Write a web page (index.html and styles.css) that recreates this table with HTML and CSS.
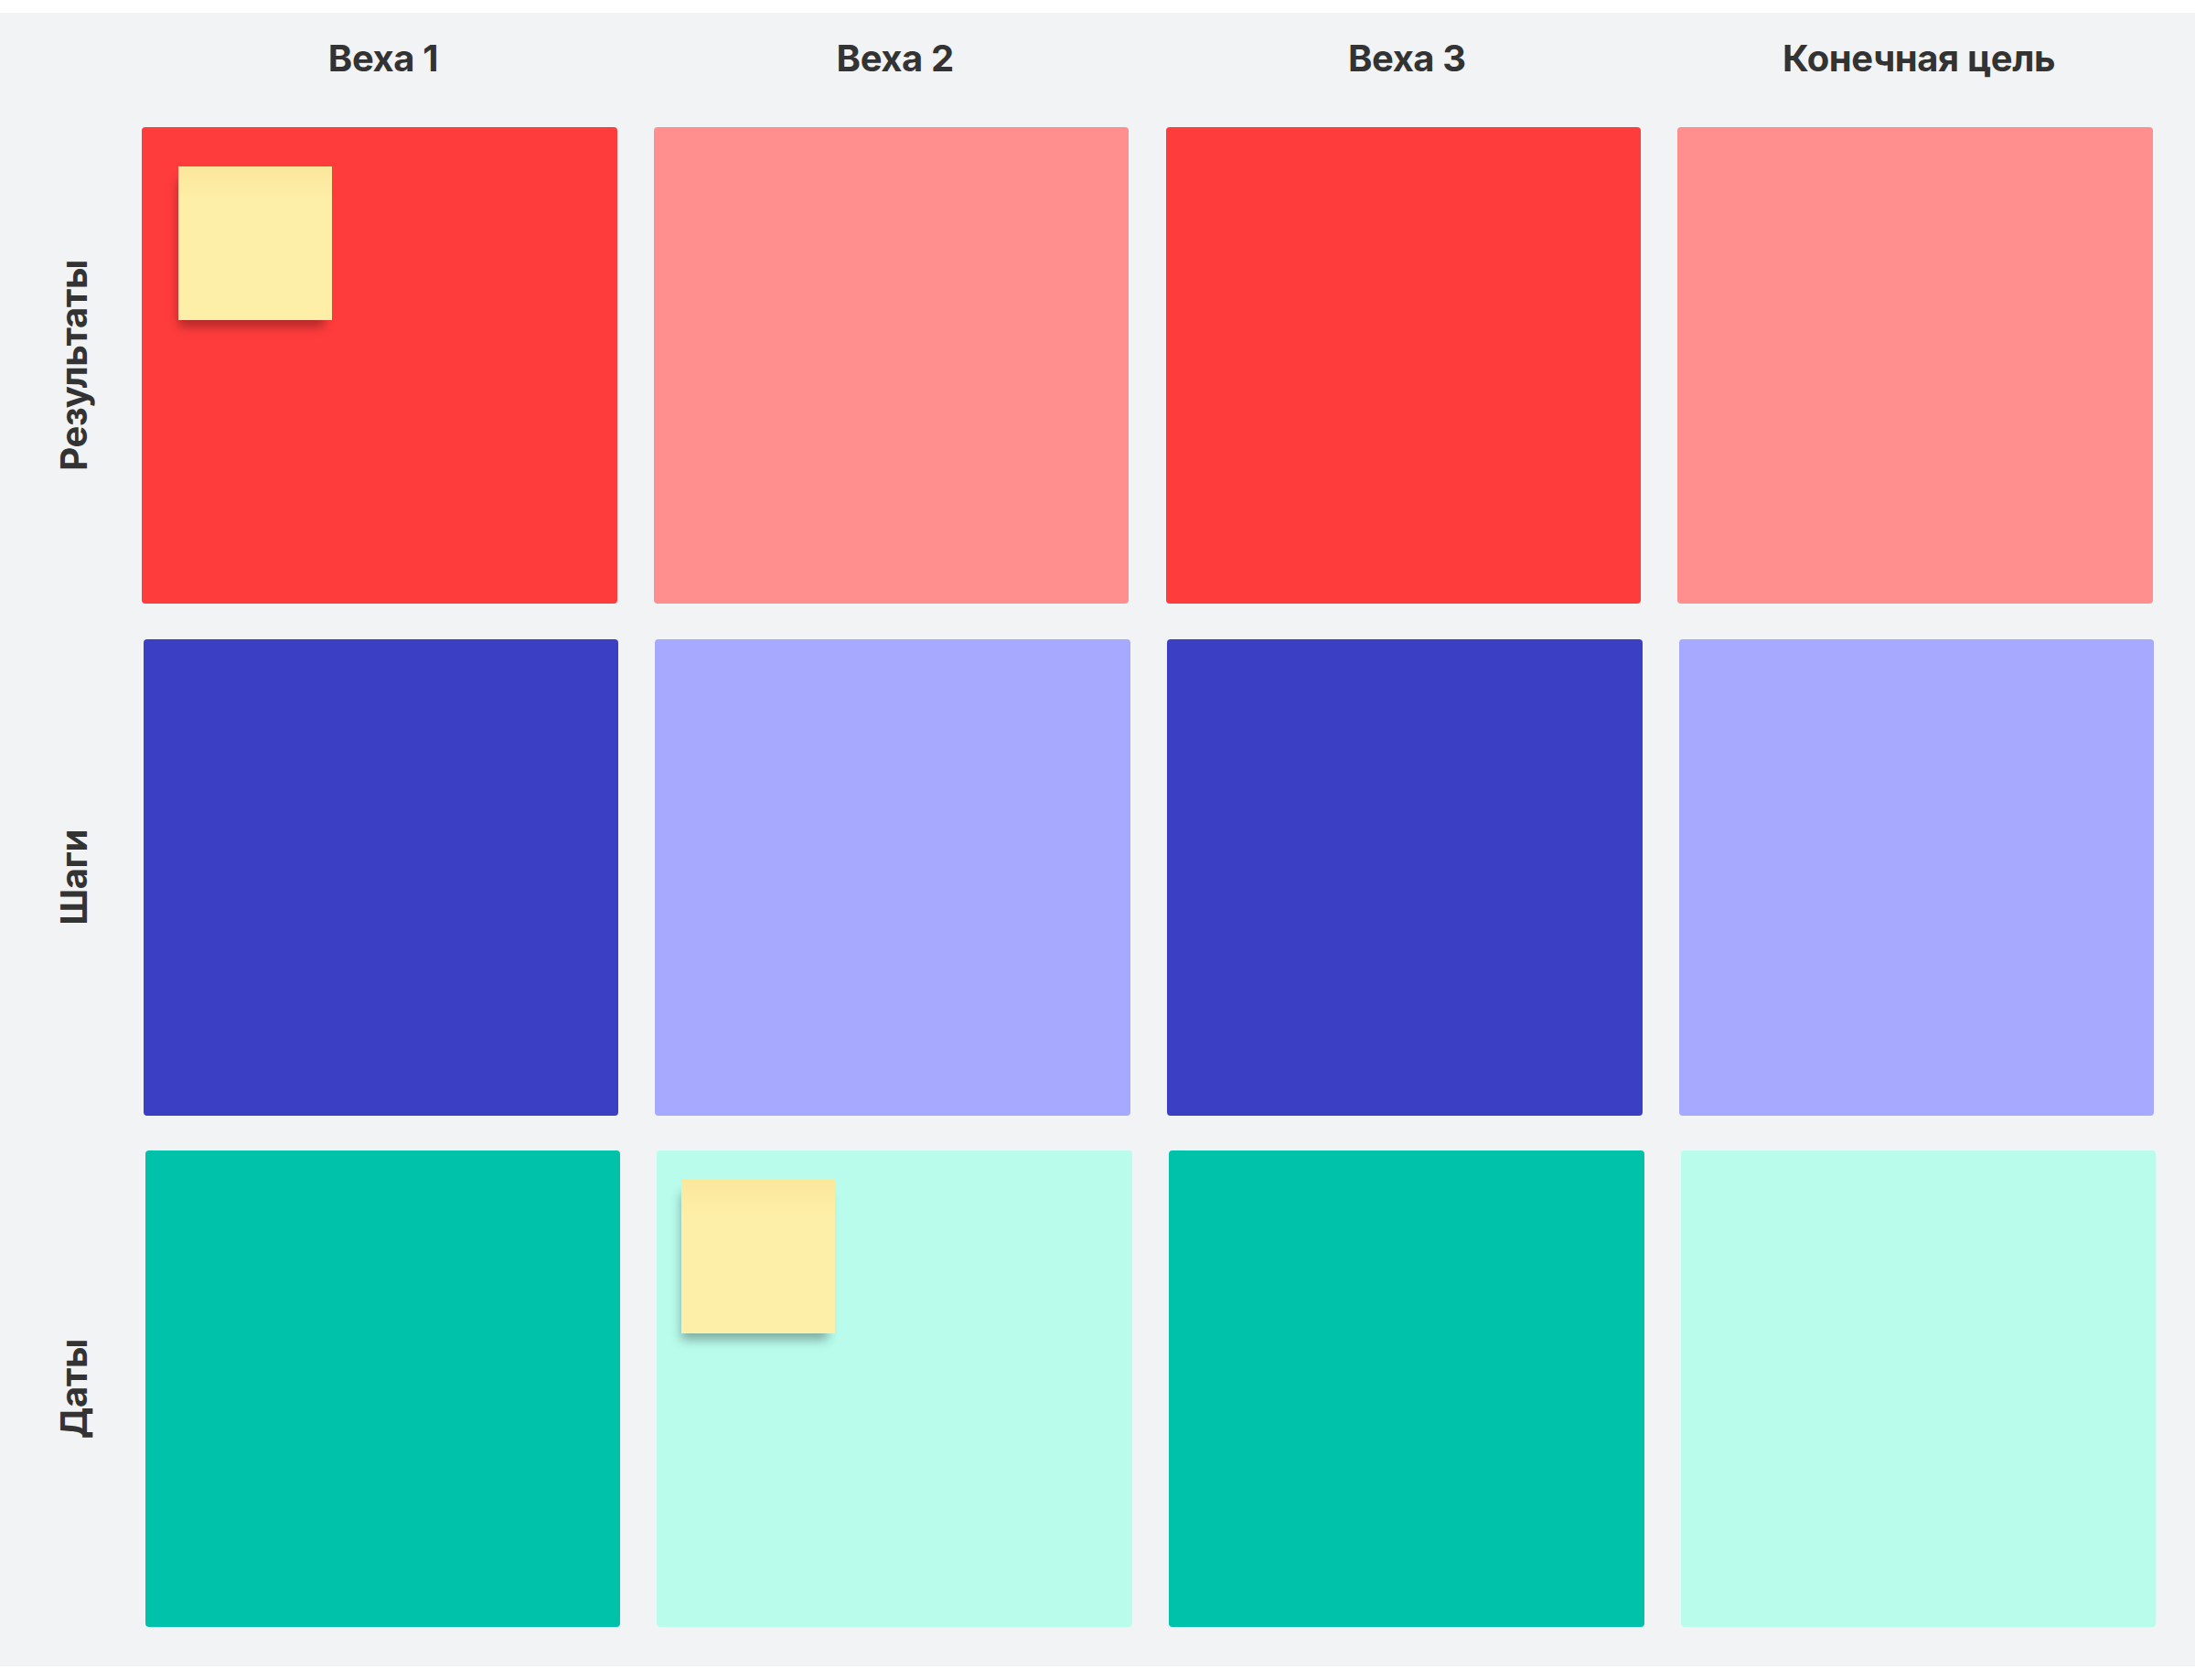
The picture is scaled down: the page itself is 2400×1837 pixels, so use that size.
FILE: index.html
```html
<!DOCTYPE html>
<html lang="ru">
<head>
<meta charset="utf-8">
<title>Вехи</title>
<link rel="stylesheet" href="styles.css">
</head>
<body>
<main class="board">
  <div class="head">
    <div class="corner"></div>
    <div class="col-title">Веха 1</div>
    <div class="col-title">Веха 2</div>
    <div class="col-title">Веха 3</div>
    <div class="col-title">Конечная цель</div>
  </div>
  <div class="row row-1">
    <div class="row-label"><span>Результаты</span></div>
    <div class="card red"><div class="sticky sticky-a"></div></div>
    <div class="card pink"></div>
    <div class="card red"></div>
    <div class="card pink"></div>
  </div>
  <div class="row row-2">
    <div class="row-label"><span>Шаги</span></div>
    <div class="card blue"></div>
    <div class="card lavender"></div>
    <div class="card blue"></div>
    <div class="card lavender"></div>
  </div>
  <div class="row row-3">
    <div class="row-label"><span>Даты</span></div>
    <div class="card teal"></div>
    <div class="card mint"><div class="sticky sticky-b"></div></div>
    <div class="card teal"></div>
    <div class="card mint"></div>
  </div>
</main>
</body>
</html>
```

FILE: styles.css
```css
html, body {
  margin: 0;
  padding: 0;
  background: #ffffff;
}

body {
  font-family: Inter, "Noto Sans", "Liberation Sans", sans-serif;
  color: #333333;
}

.board {
  margin-top: 14px;
  width: 2400px;
  height: 1808px;
  box-sizing: border-box;
  background: #f2f3f5;
  padding-top: 26px;
  display: flex;
  flex-direction: column;
  gap: 38.5px;
}

.head {
  display: flex;
  gap: 40.2px;
  height: 48px;
  margin-bottom: 12.5px;
}

.corner {
  width: 115px;
  flex: none;
}

.col-title {
  width: 519.5px;
  flex: none;
  box-sizing: border-box;
  padding-left: 8px;
  text-align: center;
  font-size: 40px;
  line-height: 48px;
  font-weight: 700;
  letter-spacing: -0.4px;
}

.row {
  display: flex;
  gap: 40.2px;
  height: 521px;
}

.row-2 { padding-left: 1.5px; }
.row-3 { padding-left: 3.5px; }

.row-label {
  width: 115px;
  flex: none;
  display: flex;
  align-items: center;
  justify-content: flex-start;
  padding-left: 57px;
  box-sizing: border-box;
}

.row-2 .row-label { padding-left: 55.5px; }
.row-3 .row-label { padding-left: 53.5px; }

.row-label span {
  writing-mode: vertical-rl;
  transform: rotate(180deg);
  font-size: 40px;
  line-height: 48px;
  font-weight: 700;
  white-space: nowrap;
  letter-spacing: -0.4px;
}

.card {
  position: relative;
  width: 519.5px;
  height: 100%;
  flex: none;
  border-radius: 4px;
}

.red { background: #ff3c3c; }
.pink { background: #ff8f8f; }
.blue { background: #3b3fc4; }
.lavender { background: #a7a8ff; }
.teal { background: #00c2aa; }
.mint { background: #b9fcec; }

.sticky {
  position: absolute;
  width: 168px;
  height: 168px;
  background: linear-gradient(#fbe79c 0%, #feefa8 25%, #feefa8 100%);
  box-shadow: -4px 11px 11px -4px rgba(0, 0, 0, 0.32);
}

.sticky-a { left: 40px; top: 43px; }
.sticky-b { left: 27px; top: 32px; }
```
